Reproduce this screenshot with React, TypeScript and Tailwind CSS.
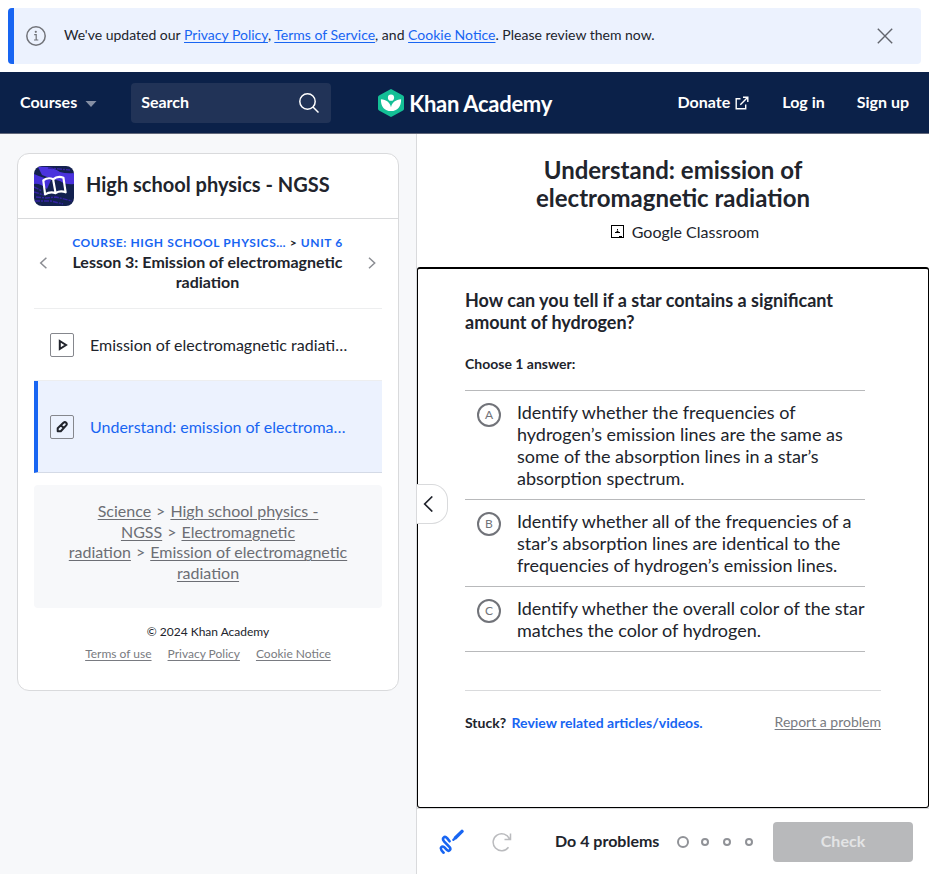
import React from "react";

const linkGray = "underline text-[#797b81] underline-offset-2";
const crumb = "underline underline-offset-[1.5px]";

function Banner() {
  return (
    <div className="p-2">
      <div className="flex h-14 items-center overflow-hidden rounded-[4px] bg-[#ecf2fe]">
        <div className="h-full w-1.5 shrink-0 bg-[#1865f2]" />
        <svg className="ml-3 shrink-0" width="20" height="20" viewBox="0 0 20 20" fill="none" stroke="#717379">
          <circle cx="10" cy="10" r="9.2" strokeWidth="1.5" />
          <path d="M8.2 8.6h2v5.2M8 14h4.3" strokeWidth="1.2" />
          <circle cx="9.8" cy="5.8" r="1.1" fill="#717379" stroke="none" />
        </svg>
        <p className="ml-[18px] flex-1 pb-0.5 text-[14px] leading-5 whitespace-nowrap text-[#21242c]">
          We've updated our <a className="text-[#1865f2] underline underline-offset-2">Privacy Policy</a>,{" "}
          <a className="text-[#1865f2] underline underline-offset-2">Terms of Service</a>, and{" "}
          <a className="text-[#1865f2] underline underline-offset-2">Cookie Notice</a>. Please review them now.
        </p>
        <svg className="mr-7" width="16" height="16" viewBox="0 0 16 16" fill="none" stroke="#62656d" strokeWidth="1.4">
          <path d="M.8.8l14.4 14.4M15.2.8L.8 15.2" />
        </svg>
      </div>
    </div>
  );
}

function Logo() {
  return (
    <div className="ml-[46px] flex items-center">
      <svg width="28" height="30" viewBox="0 0 28 30">
        <path d="M13 1.4q1-.6 2 0l11 6.2q1 .6 1 1.7v11.4q0 1.1-1 1.7l-11 6.2q-1 .6-2 0l-11-6.2q-1-.6-1-1.7V9.3q0-1.1 1-1.7z" fill="#14bf96" />
        <circle cx="14" cy="9.7" r="3.1" fill="#fff" />
        <path d="M3.9 11.2c5.5.2 9.1 3.3 10.1 8 1-4.7 4.6-7.8 10.1-8 .2 7.3-3.7 11.9-10.1 11.9S3.7 18.5 3.9 11.2z" fill="#fff" />
      </svg>
      <span className="mt-0.5 ml-1 text-[22px] leading-none font-bold tracking-[-0.3px]">Khan Academy</span>
    </div>
  );
}

function Header() {
  return (
    <header className="flex h-[62px] items-center border-b border-[#61677a] bg-[#0b2149] pr-5 text-[16px] font-bold whitespace-nowrap text-white">
      <span className="ml-5 pb-0.5">Courses</span>
      <svg className="ml-2 mt-0.5" width="12" height="6" viewBox="0 0 12 6">
        <path d="M.5 0h11L6 6z" fill="#858fa4" />
      </svg>
      <div className="ml-[34px] flex h-10 w-[200px] items-center justify-between rounded-[4px] bg-[#213357] pr-3 pl-2.5">
        <span className="pb-0.5">Search</span>
        <svg width="20" height="20" viewBox="0 0 20 20" fill="none" stroke="#fff" strokeWidth="1.5">
          <circle cx="8.5" cy="8.5" r="7.7" />
          <path d="M14 14l5.5 5.5" />
        </svg>
      </div>
      <Logo />
      <span className="ml-auto pb-0.5">Donate</span>
      <svg className="ml-[5px]" width="14" height="14" viewBox="0 0 14 14" fill="none" stroke="#fff" strokeWidth="1.4">
        <path d="M5.5 2.7H1.2v10h9.5V8.5M8 1.2h4.8V6M12.5 1.5L5.3 8.7" />
      </svg>
      <span className="ml-[33px] pb-0.5">Log in</span>
      <span className="ml-8 pb-0.5">Sign up</span>
    </header>
  );
}

function SubjectIcon() {
  return (
    <svg width="40" height="40" viewBox="0 0 40 40">
      <defs>
        <clipPath id="tile">
          <rect width="40" height="40" rx="8" />
        </clipPath>
      </defs>
      <g clipPath="url(#tile)">
        <rect width="40" height="40" fill="#13214f" />
        <path d="M4 1Q18 0 26 6q7 2 14 1v11q-8 1-14-3-9-2-18-6z" fill="#4b33dd" />
        <path d="M0 8q10 4 17 6l-4 9Q6 17 0 18z" fill="#4530d8" />
        <path d="M0 21l8 4M0 26l10 3M2 31l10 1 10-1 16 4M1 35h16l12 3M14 2l22 2" stroke="#3422a4" strokeWidth="1.4" strokeDasharray="5 1 2 1" fill="none" />
        <path d="M9.3 14.3q5-3.5 9.8-1 4.5-3.8 10.3-1.6l2.2 14.6q-5.5-2-10 .8-5.5-2-10.5 1.3zM19.1 13.3l2.5 13.8" fill="none" stroke="#fff" strokeWidth="2.2" strokeLinejoin="round" />
      </g>
    </svg>
  );
}

function Chevron({ right = false }: { right?: boolean }) {
  return (
    <svg className="-mt-0.5 -ml-px" width="8" height="12" viewBox="0 0 8 12" fill="none" stroke="#8b8d93" strokeWidth="1.5">
      <path d={right ? "M1 .7L6.7 6 1 11.3" : "M7.4 .7L1.7 6 7.4 11.3"} />
    </svg>
  );
}

function Sidebar() {
  return (
    <aside className="w-[417px] shrink-0 border-r border-[#d9dadc] bg-[#f7f8fa] pt-[19px] pl-[17px]">
      <div className="h-[538px] w-[382px] rounded-[12px] border border-[#d9dadc] bg-white">
        <div className="flex h-[65px] items-center border-b border-[#d9dadc] pl-4">
          <SubjectIcon />
          <h2 className="ml-3 pb-1 text-[20px] leading-6 font-bold text-[#21242c]">High school physics - NGSS</h2>
        </div>
        <div className="px-4">
          <div className="flex h-[90px] items-center justify-between border-b border-[#edeeef] px-1.5">
            <Chevron />
            <div className="-ml-px text-center whitespace-nowrap text-[#21242c]">
              <div className="pb-[1px] text-[12px] leading-4 font-bold tracking-[0.6px]">
                <span className="text-[#1865f2]">COURSE: HIGH SCHOOL PHYSICS…</span> &gt; <span className="text-[#1865f2]">UNIT 6</span>
              </div>
              <div className="text-[16px] leading-5 font-bold">
                Lesson 3: Emission of electromagnetic
                <br />
                radiation
              </div>
            </div>
            <Chevron right />
          </div>
          <div className="flex h-[72px] items-center border-b border-[#edeeef] pl-4 text-[16px] text-[#21242c]">
            <svg width="24" height="24" viewBox="0 0 24 24" fill="none">
              <rect x=".5" y=".5" width="23" height="23" rx="1.5" stroke="#85878d" />
              <path d="M9.8 8v8l6.2-4z" stroke="#21242c" strokeWidth="2" />
            </svg>
            <span className="ml-4">Emission of electromagnetic radiati…</span>
          </div>
          <div className="flex h-[92px] items-center border-b border-l-4 border-b-[#d4dae6] border-l-[#1865f2] bg-[#ecf2fe] pl-3 text-[16px] text-[#1865f2]">
            <svg width="24" height="24" viewBox="0 0 24 24" fill="none">
              <rect x=".5" y=".5" width="23" height="23" rx="1.5" stroke="#85878d" />
              <path d="M7.7 16.3v-3.1l5.7-5.5q1.5-1.2 2.8 0 1.2 1.2 0 2.7l-5.4 5.9zM11 10.3l2.8 2.8" stroke="#21242c" strokeWidth="2" strokeLinejoin="round" />
            </svg>
            <span className="ml-4">Understand: emission of electroma…</span>
          </div>
          <div className="mt-3 h-[123px] rounded-[4px] bg-[#f7f8fa] pt-4 text-center text-[16px] leading-[20.7px] whitespace-nowrap text-[#6c6e74]">
            <a className={crumb}>Science</a><span className="mx-[5px]">&gt;</span><a className={crumb}>High school physics -</a>
            <br />
            <a className={crumb}>NGSS</a><span className="mx-[5px]">&gt;</span><a className={crumb}>Electromagnetic</a>
            <br />
            <a className={crumb}>radiation</a><span className="mx-[5px]">&gt;</span><a className={crumb}>Emission of electromagnetic</a>
            <br />
            <a className={crumb}>radiation</a>
          </div>
          <p className="mt-4 text-center text-[12px] leading-4 text-[#21242c]">© 2024 Khan Academy</p>
          <div className="mt-1.5 flex justify-center gap-4 text-[12px] leading-4">
            <a className={linkGray}>Terms of use</a>
            <a className={linkGray}>Privacy Policy</a>
            <a className={linkGray}>Cookie Notice</a>
          </div>
        </div>
      </div>
    </aside>
  );
}

const answers = [
  { key: "A", lines: ["Identify whether the frequencies of", "hydrogen’s emission lines are the same as", "some of the absorption lines in a star’s", "absorption spectrum."] },
  { key: "B", lines: ["Identify whether all of the frequencies of a", "star’s absorption lines are identical to the", "frequencies of hydrogen’s emission lines."] },
  { key: "C", lines: ["Identify whether the overall color of the star", "matches the color of hydrogen."] },
];

function Exercise() {
  return (
    <section className="relative h-[541px] rounded-[3px] border border-t-2 border-black px-[47px] text-[#21242c]">
      <h3 className="pt-5 text-[18px] leading-[22px] font-bold whitespace-nowrap">
        How can you tell if a star contains a significant
        <br />
        amount of hydrogen?
      </h3>
      <p className="mt-[21px] text-[14px] leading-5 font-bold">Choose 1 answer:</p>
      <ul className="mt-4 w-[400px] border-t border-[#b8b9bb]">
        {answers.map((a) => (
          <li key={a.key} className="flex border-b border-[#b8b9bb] pt-2.5 pb-2.5 pl-3">
            <span className="mt-0.5 flex h-6 w-6 shrink-0 items-center justify-center rounded-full border-2 border-[#717379] text-[12px] text-[#717379]">{a.key}</span>
            <div className="ml-4 text-[18px] leading-[22px] whitespace-nowrap">
              {a.lines.map((l) => (
                <div key={l}>{l}</div>
              ))}
            </div>
          </li>
        ))}
      </ul>
      <div className="mt-[38px] flex items-start justify-between border-t border-[#d9dadc] pt-[22px] text-[14px] leading-5">
        <p className="font-bold">
          Stuck? <a className="ml-0.5 text-[#1865f2]">Review related articles/videos.</a>
        </p>
        <a className="-mt-px text-[#797b81] underline underline-offset-2">Report a problem</a>
      </div>
      <button className="absolute top-[215px] -left-px flex h-10 w-[31px] items-center rounded-r-[16px] border border-l-0 border-[#d9dadc] bg-white pl-1.5">
        <svg width="11" height="16" viewBox="0 0 11 16" fill="none" stroke="#21242c" strokeWidth="1.7">
          <path d="M9.3.5L1.7 8l7.600 7.500" />
        </svg>
      </button>
    </section>
  );
}

function Footer() {
  return (
    <footer className="flex h-[66px] items-center border-t border-[#d9dadc] pr-4 pl-[22px] text-[16px] font-bold text-[#21242c]">
      <svg width="25" height="26" viewBox="0 0 25 26" fill="none" stroke="#1865f2" strokeLinecap="round" strokeLinejoin="round">
        <path d="M4.600 23.700Q.8 20 2.200 18.300q1.500-1.800 3.500.3l2.300 2.500q1.600 1.400 2.800.1 1.200-1.300-.2-3L5 12.300Q3.200 10 4.600 8.600q1.600-1.500 3.500.5l2.500 3.200" strokeWidth="2.600" />
        <path d="M16.500 8.700L23 2.400" strokeWidth="3.400" />
        <path d="M14.300 10.900l1.200-1.200" strokeWidth="2.200" />
      </svg>
      <svg className="ml-[27px]" width="21" height="20" viewBox="0 0 21 20" fill="none" stroke="#babbbe" strokeWidth="1.5">
        <path d="M17.500 15.200A8.500 8.500 0 1 1 18.500 7M19.500 1.500v6h-6" />
      </svg>
      <span className="ml-[43px] pb-0.5 whitespace-nowrap">Do 4 problems</span>
      <span className="ml-[18px] h-3 w-3 rounded-full border-2 border-[#909297]" />
      <span className="ml-3 h-2 w-2 rounded-full border-2 border-[#909297]" />
      <span className="ml-3.5 h-2 w-2 rounded-full border-2 border-[#909297]" />
      <span className="ml-3.5 h-2 w-2 rounded-full border-2 border-[#909297]" />
      <button className="ml-auto h-10 w-[140px] rounded-[4px] bg-[#b8b9bb] pb-0.5 font-bold text-[#e3e4e5]">Check</button>
    </footer>
  );
}

export default function App() {
  return (
    <div className="flex h-[874px] w-[929px] flex-col overflow-hidden bg-white font-[Lato,sans-serif]">
      <Banner />
      <Header />
      <div className="flex flex-1">
        <Sidebar />
        <main className="min-w-0 flex-1">
          <div className="h-[133px] pt-[22px] text-center text-[#21242c]">
            <h1 className="text-[24px] leading-7 font-bold">
              Understand: emission of
              <br />
              electromagnetic radiation
            </h1>
            <div className="mt-2.5 flex items-center justify-center pl-6 text-[16px] leading-5">
              <svg className="mr-2 -mt-px" width="13" height="13" viewBox="0 0 13 13" fill="none">
                <rect x=".5" y=".5" width="12" height="12" stroke="#000" />
                <path d="M4 7h5v1H4zM5.500 6h2v1h-2zM6 4h1v1.500H6zM8 11h3v1H8z" fill="#000" />
              </svg>
              Google Classroom
            </div>
          </div>
          <Exercise />
          <Footer />
        </main>
      </div>
    </div>
  );
}
